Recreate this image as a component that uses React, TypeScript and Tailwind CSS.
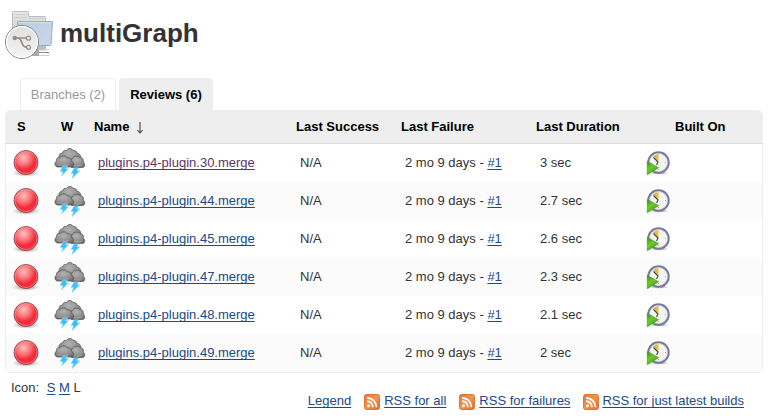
type Job = { name: string; duration: string; visited?: boolean };

const jobs: Job[] = [
  { name: 'plugins.p4-plugin.30.merge', duration: '3 sec', visited: true },
  { name: 'plugins.p4-plugin.44.merge', duration: '2.7 sec' },
  { name: 'plugins.p4-plugin.45.merge', duration: '2.6 sec' },
  { name: 'plugins.p4-plugin.47.merge', duration: '2.3 sec' },
  { name: 'plugins.p4-plugin.48.merge', duration: '2.1 sec' },
  { name: 'plugins.p4-plugin.49.merge', duration: '2 sec' },
];

const columns = 'grid grid-cols-[45px_43px_202px_105px_135px_110px_1fr] items-center';
const link = 'text-[#204A87] underline underline-offset-2 decoration-1 [text-decoration-skip-ink:none]';

function Gradients() {
  return (
    <svg className="absolute h-0 w-0" aria-hidden="true">
      <defs>
        <radialGradient id="red" cx="0.4" cy="0.3" r="0.7">
          <stop offset="0" stopColor="#ffc0c0" />
          <stop offset="0.4" stopColor="#fb747a" />
          <stop offset="0.72" stopColor="#f02a38" />
          <stop offset="1" stopColor="#f6303c" />
        </radialGradient>
        <radialGradient id="shade">
          <stop offset="0.4" stopColor="#777" stopOpacity="0.55" />
          <stop offset="1" stopColor="#999" stopOpacity="0" />
        </radialGradient>
        <radialGradient id="cloud" cx="0.45" cy="0.35" r="0.75">
          <stop offset="0" stopColor="#b2b2b2" />
          <stop offset="0.55" stopColor="#929292" />
          <stop offset="1" stopColor="#666" />
        </radialGradient>
        <linearGradient id="play" x1="0" y1="0" x2="0.6" y2="1">
          <stop offset="0" stopColor="#3c8c14" />
          <stop offset="0.5" stopColor="#6cca30" />
          <stop offset="1" stopColor="#3f9a12" />
        </linearGradient>
        <linearGradient id="rss" x1="0" y1="0" x2="1" y2="1">
          <stop offset="0" stopColor="#e5763a" />
          <stop offset="0.5" stopColor="#f3954b" />
          <stop offset="1" stopColor="#dc6a30" />
        </linearGradient>
        <linearGradient id="paper" x1="0" y1="0" x2="0" y2="1">
          <stop offset="0" stopColor="#e9e9e9" />
          <stop offset="1" stopColor="#b9b9b9" />
        </linearGradient>
        <linearGradient id="folder" x1="0" y1="0" x2="1" y2="1">
          <stop offset="0" stopColor="#bccbdf" />
          <stop offset="1" stopColor="#c9d8e9" />
        </linearGradient>
        <linearGradient id="disc" x1="0" y1="0" x2="0" y2="1">
          <stop offset="0" stopColor="#dfdfdf" />
          <stop offset="1" stopColor="#f5f5f5" />
        </linearGradient>
      </defs>
    </svg>
  );
}

function ProjectIcon() {
  return (
    <svg className="h-[52px] w-[51px] shrink-0" viewBox="4 8 51 52" fill="none">
      <path d="M12.5 50V12.5q0-1 1-1H27q1.500 0 1.500 1.500v3.500H45q.5 0 .5 1V50z" fill="url(#paper)" stroke="#bdbdbd" />
      <path d="M14 14.500h13M14 17.500h13M29 18.500h16" stroke="#cecece" />
      <path d="M17.500 21.500h35L51 44.500q-.2 1-1.200 1H19z" fill="url(#folder)" stroke="#91aed2" />
      <path d="M18.500 22.500h33" stroke="#d5e0ee" />
      <path d="M39 49.500h10M39 55.500h10" stroke="#d0d0d0" />
      <path d="M41 46.500v3" stroke="#bcbcbc" strokeWidth="3" />
      <path d="M32 48l7 1v7h-9z" fill="#a9a9a9" />
      <path d="M39 52.500h10" stroke="#858585" />
      <circle cx="22" cy="42" r="16.500" fill="url(#disc)" stroke="#858585" />
      <circle cx="22" cy="42" r="15.400" stroke="#fff" strokeWidth="1.200" />
      <path d="M15 38h11.500M17.500 38c5.500 0 3 9 9 9.300" stroke="#929087" strokeWidth="1.700" />
      <circle cx="14.800" cy="38" r="2.300" fill="#929087" />
      <circle cx="28.500" cy="38.200" r="2" fill="#eee" stroke="#929087" strokeWidth="1.200" />
      <circle cx="28.500" cy="47.300" r="2" fill="#eee" stroke="#929087" strokeWidth="1.200" />
    </svg>
  );
}

function RedBall() {
  return (
    <svg className="ml-1 h-8 w-8" viewBox="0 0 32 32">
      <ellipse cx="16" cy="26" rx="14" ry="4" fill="url(#shade)" />
      <circle cx="16" cy="15.500" r="12" fill="url(#red)" stroke="#8d4a4d" strokeWidth="0.900" />
      <circle cx="16" cy="15.500" r="11" fill="none" stroke="#ff9a9e" strokeOpacity="0.55" />
    </svg>
  );
}

function Storm() {
  return (
    <svg className="ml-[3px] h-8 w-8" viewBox="0 0 32 32" strokeLinejoin="round">
      <g fill="url(#cloud)" stroke="#555" strokeWidth="0.700">
        <path d="M6 13C4 10 5 6 8.500 6 9 3.500 11 3 12.500 3.400 14 .7 18 .9 19 3.400c2-.3 4 .8 4 2.800 3 .2 4.500 3 3.300 6L24 17H8z" />
        <path d="M17 20c-3-2-3-7 1-8 1-3 6-4 8-1.500 2.500 0 4 2 3.200 4.500 2.300 1.500 2 5.500-.7 5.500H18z" />
        <path d="M3.500 20C.5 19.700.2 15.500 2.300 14.300 2 11.500 4 9.800 6.300 10.300 8 8 12 8.300 13 10.700c3-.4 4.500 1.500 4.300 3.600 3 .7 3 5.200 0 5.700z" />
      </g>
      <path d="M3 17.500q5 1.500 12 0M20 18.500q4 1 8-.5" fill="none" stroke="#b4b4b4" strokeOpacity="0.600" strokeWidth="1.200" />
      <path d="M9 19h4.500l-2 2.800h3L7.500 29l1.500-4.500H6zM20 21h4.500l-1.700 2.800h3L18 31.500l1.500-5H17z" fill="#3dbff5" stroke="#93dcfa" strokeWidth="0.600" />
    </svg>
  );
}

function ScheduleIcon() {
  return (
    <svg className="h-6 w-6" viewBox="0 0 24 24">
      <ellipse cx="13" cy="22" rx="10" ry="1.800" fill="url(#shade)" />
      <circle cx="12.500" cy="11.500" r="10.200" fill="#f5f5f1" stroke="#777a99" strokeWidth="2.100" />
      <circle cx="12.500" cy="11.500" r="9" fill="none" stroke="#c3c4d0" strokeWidth="0.700" />
      <path d="M12.500 11L7 5.500q2.500-2.500 5.500-2.500z" fill="#dfbc4d" />
      <path d="M7.500 6.500l4.500 4.500-1.500 3" fill="none" stroke="#45453e" strokeWidth="1.100" />
      <path d="M19 11.500h1M12.500 18v1" stroke="#aaa" />
      <path d="M1.300 10.300l11.200 6.400-11.200 7z" fill="url(#play)" stroke="#4c9f22" strokeWidth="0.700" />
    </svg>
  );
}

function Rss({ children, className }: { children: string; className: string }) {
  return (
    <span className={`flex items-center ${className}`}>
      <svg className="mt-px h-4 w-4" viewBox="0 0 16 16" fill="none">
        <rect x="0.500" y="0.500" width="15" height="15" rx="2" fill="url(#rss)" stroke="#dc783d" />
        <circle cx="4.500" cy="11.700" r="1.500" fill="#fff" />
        <path d="M3 7.200c3.300 0 6 2.700 6 6M3 3.800c5.200 0 9.500 4.200 9.500 9.500" stroke="#fff" strokeWidth="1.800" />
      </svg>
      <a className={link}>{children}</a>
    </span>
  );
}

export default function App() {
  return (
    <div className="h-[417px] w-[773px] overflow-hidden bg-white pt-2 pl-[5px] font-['Liberation_Sans',Helvetica,Arial,sans-serif] text-[13px] leading-[18px] text-[#333]">
      <Gradients />
      <header className="-ml-px flex h-[70px]">
        <ProjectIcon />
        <h1 className="ml-[5px] pt-[10px] text-[26px] leading-[30px] font-bold">multiGraph</h1>
      </header>

      <nav className="ml-[15px] flex h-8 gap-[3px]">
        <a className="flex w-24 justify-center rounded-t-[4px] border border-b-0 border-[#eee] pt-[7px] text-[#999]">Branches (2)</a>
        <a className="flex w-[94px] justify-center rounded-t-[4px] bg-[#eee] pt-2 font-bold text-black">Reviews (6)</a>
      </nav>

      <main className="w-[758px] overflow-hidden rounded-[5px] border border-[#eee]">
        <div className={`${columns} -mt-px h-[34px] border-b border-[#ddd] bg-[#eee] font-bold text-black`}>
          <span className="ml-[11px]">S</span>
          <span className="ml-[10px]">W</span>
          <span className="flex items-center gap-[7px]">
            Name
            <svg className="mt-[3px] h-3 w-2" viewBox="0 0 8 12" fill="none" stroke="#444" strokeWidth="1.100">
              <path d="M4 0v11M1.300 8L4 11l2.700-3" />
            </svg>
          </span>
          <span>Last Success</span>
          <span>Last Failure</span>
          <span>Last Duration</span>
          <span className="ml-[29px]">Built On</span>
        </div>
        {jobs.map((job) => (
          <div key={job.name} className={`${columns} h-[38px] odd:bg-[#fbfbfb]`}>
            <RedBall />
            <Storm />
            <a className={`ml-1 ${link} ${job.visited ? 'text-[#5c3566]!' : ''}`}>{job.name}</a>
            <span className="ml-1">N/A</span>
            <span className="ml-1">2 mo 9 days - <a className={link}>#1</a></span>
            <span className="ml-1">{job.duration}</span>
            <ScheduleIcon />
          </div>
        ))}
      </main>

      <footer>
        <div className="mt-[6px] ml-[6px] flex h-[13px] gap-[3.600px]">
          <span className="mr-1">Icon:</span>
          <a className={link}>S</a>
          <a className={link}>M</a>
          <span>L</span>
        </div>
        <div className="mr-[29px] flex items-center justify-end">
          <a className={link}>Legend</a>
          <Rss className="ml-[13px] gap-1">RSS for all</Rss>
          <Rss className="ml-[13px] gap-1">RSS for failures</Rss>
          <Rss className="ml-[13px] gap-[3px]">RSS for just latest builds</Rss>
        </div>
      </footer>
    </div>
  );
}
